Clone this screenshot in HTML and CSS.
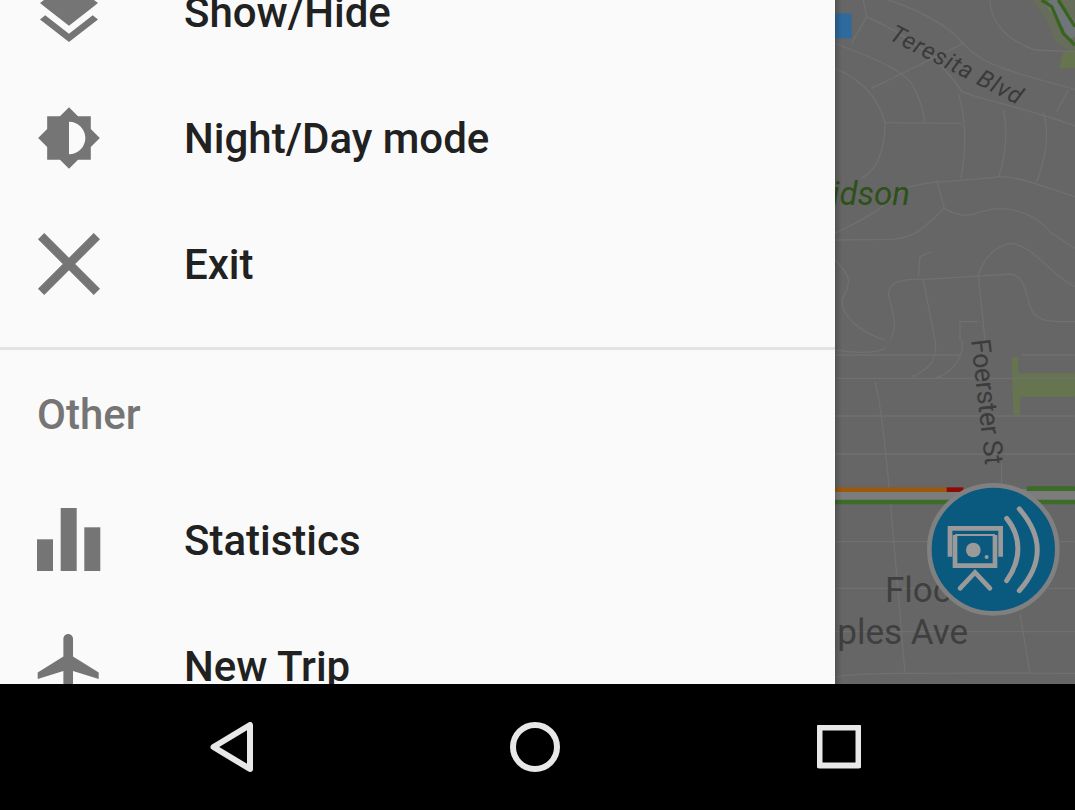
FILE: index.html
```html
<!DOCTYPE html>
<html lang="en">
<head>
<meta charset="utf-8">
<title>Menu</title>
<link rel="stylesheet" href="styles.css">
</head>
<body>
<div class="screen">
  <main class="main">
    <nav class="drawer">
      <ul class="menu">
        <li class="row">
          <svg class="icon" viewBox="2.07 1.83 19.87 19.87"><path d="M11.99 18.54l-7.37-5.73L3 14.07l9 7 9-7-1.63-1.27-7.38 5.74zM12 16l7.36-5.73L21 9l-9-7-9 7 1.63 1.27L12 16z"/></svg>
          <span class="label">Show/Hide</span>
        </li>
        <li class="row">
          <svg class="icon" viewBox="0.27 0.27 23.47 23.47"><path d="M20 15.31L23.31 12 20 8.69V4h-4.69L12 .69 8.69 4H4v4.69L.69 12 4 15.31V20h4.69L12 23.31 15.31 20H20v-4.69zM12 18V6c3.31 0 6 2.69 6 6s-2.69 6-6 6z"/></svg>
          <span class="label">Night/Day mode</span>
        </li>
        <li class="row">
          <svg class="icon" viewBox="4.78 4.78 14.45 14.45"><path d="M19 6.41L17.59 5 12 10.59 6.41 5 5 6.41 10.59 12 5 17.59 6.41 19 12 13.41 17.59 19 19 17.59 13.41 12z"/></svg>
          <span class="label">Exit</span>
        </li>
        <li class="divider"></li>
        <li class="subheader">Other</li>
        <li class="row">
          <svg class="icon" viewBox="0 0 64 64"><rect x="0" y="31.3" width="16" height="31.7"/><rect x="23.7" y="0" width="16" height="63"/><rect x="47.3" y="19.3" width="16" height="43.7"/></svg>
          <span class="label">Statistics</span>
        </li>
        <li class="row">
          <svg class="icon" viewBox="1.78 2 19.94 19.94"><path d="M21 16v-2l-8-5V3.5c0-.83-.67-1.5-1.5-1.5S10 2.67 10 3.5V9l-8 5v2l8-2.5V19l-2 1.5V22l3.5-1 3.5 1v-1.5L13 19v-5.5l8 2.5z"/></svg>
          <span class="label">New Trip</span>
        </li>
      </ul>
    </nav>
    <div class="map">
      <svg class="map-svg" viewBox="0 0 240 684">
        <defs>
          <linearGradient id="edge" x1="0" x2="1" y1="0" y2="0">
            <stop offset="0" stop-color="#000" stop-opacity=".2"/>
            <stop offset="1" stop-color="#000" stop-opacity="0"/>
          </linearGradient>
        </defs>
        <rect class="map-bg" width="240" height="684"/>
        <g transform="scale(.3333)">
          <path class="water" d="M0 40H50V115H0z"/>
          <path class="park-faint" d="M590 0H720V150H700L660 125L630 50Z"/>
          <path class="park" d="M690 150H720V205H672L680 170Z"/>
          <path class="road" d="M160 0C250 30 330 70 380 125C430 190 520 215 720 268"/>
          <path class="road" d="M85 0L95 50C170 85 300 150 380 275C440 300 580 325 720 378"/>
          <path class="road" d="M465 0C465 60 510 120 600 150L720 155"/>
          <path class="road" d="M95 50L50 130M0 130C100 170 190 200 230 250C260 300 265 340 270 365"/>
          <path class="road" d="M110 265L385 130"/>
          <path class="road" d="M0 205C80 240 130 290 150 370C150 440 130 510 80 535"/>
          <path class="road" d="M150 368L380 370"/>
          <path class="road" d="M370 280C395 360 395 440 378 535"/>
          <path class="road" d="M505 330C520 400 510 470 492 530"/>
          <path class="road" d="M625 335C645 400 630 480 605 545"/>
          <path class="road" d="M665 335L700 270"/>
          <path class="road" d="M0 700C60 670 130 640 200 570C260 540 400 545 490 530C560 530 620 560 720 590"/>
          <path class="road" d="M305 540L328 625C370 650 400 650 440 635C520 610 600 640 650 700L720 745"/>
          <path class="road" d="M328 625C270 680 240 715 170 718L0 720"/>
          <path class="road" d="M720 860C640 820 600 740 530 730C480 735 450 770 430 825"/>
          <path class="road" d="M160 880C165 850 190 835 270 838L530 822C570 830 570 880 590 930C610 970 660 965 720 965"/>
          <path class="road" d="M265 840L300 1020M430 825L450 1020"/>
          <path class="road" d="M160 880C175 950 190 980 165 1020"/>
          <path class="road" d="M0 780C50 830 50 850 20 900C20 950 80 1000 150 1020"/>
          <path class="road" d="M375 1020V965H430M250 830L255 770L290 755"/>
          <path class="route-gap" d="M645 0L700 70L720 110"/>
          <path class="route" d="M620 0L650 20L685 100L720 135"/>
          <path class="route" d="M670 0L720 80"/>
        </g>
        <g transform="translate(0 340) scale(.3333)">
          <path class="park" d="M530 50H550V100H720V170H555V225H535Z"/>
          <path class="road" d="M0 30C60 40 130 40 150 25M230 110C280 90 310 60 300 0M380 0C390 50 350 100 300 115M0 115H720"/>
          <path class="road" d="M120 125C145 220 160 400 210 1000"/>
          <path class="road" d="M0 45H380M560 45H720M0 228H720M0 342H720M0 605H720M0 745H720M0 875H720M0 1012C40 1000 100 998 720 1000"/>
          <path class="road" d="M500 370V440M555 820L585 1000"/>
          <path class="road wide" d="M0 467H720"/>
          <path class="traffic orange" d="M0 449H335"/>
          <path class="traffic red" d="M335 449H385"/>
          <path class="traffic green" d="M575 446H720M0 486H720"/>
        </g>
        <text class="lbl lbl-teresita" transform="translate(53 39) rotate(27)">Teresita Blvd</text>
        <text class="lbl lbl-park" x="75" y="205" text-anchor="end">Davidson</text>
        <text class="lbl lbl-foerster" transform="translate(136 340) rotate(83.500)">Foerster St</text>
        <text class="lbl lbl-place" x="50" y="602">Floc</text>
        <text class="lbl lbl-place" x="133" y="644" text-anchor="end">Maples Ave</text>
        <g transform="translate(0 340) scale(.3333)">
          <circle class="cam-disc" cx="475" cy="628" r="192"/>
          <path class="cam-line" d="M345 650V565H497V650"/>
          <path class="cam-line" d="M360 585V677H480V585"/>
          <path class="cam-thin" d="M360 585H480"/>
          <path class="cam-line cam-round" d="M375 745L420 697L465 745"/>
          <circle class="cam-dot" cx="415" cy="630" r="22"/>
          <circle class="cam-dot" cx="455" cy="651" r="6"/>
          <path class="cam-arc" d="M515 535C560 590 560 660 515 722M553 507C625 590 625 670 553 752"/>
        </g>
        <rect fill="url(#edge)" width="7" height="684"/>
      </svg>
    </div>
  </main>
  <footer class="navbar">
    <svg class="nav-icon nav-back" viewBox="0 0 44 50"><path d="M40 3V47L3.500 25Z"/></svg>
    <svg class="nav-icon nav-home" viewBox="0 0 50 50"><circle cx="25" cy="25" r="22"/></svg>
    <svg class="nav-icon nav-recent" viewBox="0 0 44 44"><rect x="2.500" y="2.500" width="39" height="38"/></svg>
  </footer>
</div>
</body>
</html>
```
FILE: styles.css
```css
* { box-sizing: border-box; }
html, body { margin: 0; padding: 0; overflow: hidden; background: #000; }
.screen { width: 1075px; height: 810px; display: flex; flex-direction: column; overflow: hidden; font-family: Roboto, "Liberation Sans", sans-serif; }
.main { height: 684px; display: flex; overflow: hidden; flex: none; }
.drawer { width: 835px; flex: none; background: #fafafa; overflow: hidden; }
.menu { list-style: none; margin: -51px 0 0; padding: 0; }
.row { height: 126px; display: flex; align-items: center; padding-left: 37px; }
.icon { width: 64px; height: 64px; flex: none; fill: #757575; margin-right: 83px; }
.label { font-size: 42px; font-weight: 500; line-height: 50px; margin-top: 2px; color: #212121; white-space: nowrap; }
.divider { height: 3px; background: #e3e3e3; margin-top: 20px; }
.subheader { height: 127px; display: flex; align-items: center; padding: 3px 0 0 37px; font-size: 42px; line-height: 50px; font-weight: 500; color: #757575; }
.map { flex: 1; overflow: hidden; background: #666; }
.map-svg { display: block; width: 240px; height: 684px; }
.map-bg { fill: #666; }
.water { fill: #2f6a9e; }
.park { fill: #66744f; }
.park-faint { fill: #666d5a; }
.road { fill: none; stroke: #707070; stroke-width: 4; }
.road.wide { stroke: #7c7c7c; stroke-width: 38; }
.route { fill: none; stroke: #39641f; stroke-width: 10; }
.route-gap { fill: none; stroke: #70757a; stroke-width: 40; }
.traffic { fill: none; stroke-width: 14; }
.orange { stroke: #9a5a10; }
.red { stroke: #8c0a0a; }
.green { stroke: #3d6b2a; }
.lbl { font-family: Roboto, sans-serif; }
.lbl-teresita { font-size: 24px; font-style: italic; letter-spacing: 1px; fill: #3a3a3a; }
.lbl-park { font-size: 33px; font-style: italic; fill: #2c5218; }
.lbl-foerster { font-size: 27px; letter-spacing: -.5px; fill: #3c3c3c; }
.lbl-place { font-size: 35px; fill: #3f3f3f; }
.cam-disc { fill: #0a5a80; stroke: #808080; stroke-width: 14; }
.cam-line { fill: none; stroke: #9a9a9a; stroke-width: 14; }
.cam-round { stroke-linecap: round; }
.cam-thin { fill: none; stroke: #9a9a9a; stroke-width: 6; }
.cam-dot { fill: #9a9a9a; }
.cam-arc { fill: none; stroke: #9a9a9a; stroke-width: 15; stroke-linecap: round; }
.navbar { height: 126px; flex: none; background: #000; position: relative; }
.nav-icon { fill: none; stroke: #e8e8e8; stroke-width: 6; stroke-linejoin: round; position: absolute; }
.nav-back { left: 210px; top: 38px; width: 44px; height: 50px; }
.nav-home { left: 510px; top: 38px; width: 50px; height: 50px; }
.nav-recent { left: 817px; top: 41px; width: 44px; height: 44px; }
```
